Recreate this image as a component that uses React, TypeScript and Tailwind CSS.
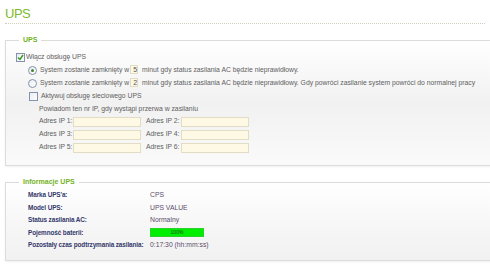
import React from "react"

// small fake checkbox, drawn to match the old firmware UI
const Check = ({ checked }: { checked?: boolean }) => (
  <span className="w-[9px] h-[9px] border border-[#8592ad] bg-gradient-to-br from-[#e9ecf2] to-white flex items-center justify-center shrink-0">
    {checked && (
      <svg width="7" height="7" viewBox="0 0 7 7">
        <path d="M1 3.5 L3 5.5 L6 1" fill="none" stroke="#2f9a1c" strokeWidth="1.4" />
      </svg>
    )}
  </span>
)

const Radio = ({ checked }: { checked?: boolean }) => (
  <span className="w-[9px] h-[9px] rounded-full border border-[#8592ad] bg-gradient-to-br from-[#e9ecf2] to-white flex items-center justify-center shrink-0">
    {checked && <span className="w-[3px] h-[3px] rounded-full bg-[#3d8a2a]" />}
  </span>
)

const Input = ({ value, w }: { value?: string; w: string }) => (
  <span className={`${w} h-[10px] shrink-0 border border-[#e2dcc4] bg-[#fdf9e4] text-[7px] leading-[8px] pl-[2px] text-[#555]`}>
    {value}
  </span>
)

const ipRows = [
  ["Adres IP 1:", "Adres IP 2:"],
  ["Adres IP 3:", "Adres IP 4:"],
  ["Adres IP 5:", "Adres IP 6:"],
]

const info = [
  { label: "Marka UPS'a:", value: "CPS" },
  { label: "Model UPS:", value: "UPS VALUE" },
  { label: "Status zasilania AC:", value: "Normalny" },
  { label: "Pojemność baterii:", value: "bar" },
  { label: "Pozostały czas podtrzymania zasilania:", value: "0:17:30 (hh:mm:ss)" },
]

export default function App() {
  return (
    <div className="w-[490px] h-[270px] overflow-hidden bg-white font-['Liberation_Sans',Arial,sans-serif] whitespace-nowrap">
      {/* Page title */}
      <div className="mx-[5px] pt-[5px] border-b border-dotted border-[#cfcfbf]">
        <h1 className="text-[13px] leading-[18px] tracking-[-0.5px] text-[#7dba2f]">UPS</h1>
      </div>

      {/* UPS settings */}
      <fieldset className="ml-[5px] mt-[11px] w-[500px] border border-[#dcdcdc] bg-gradient-to-b from-white via-[#f1f1f1] to-[#fafafa] pl-[10px] pb-[11px] shadow-[0_1px_2px_rgba(0,0,0,0.06)]">
        <legend className="px-[4px] ml-[3px] text-[7px] leading-[10px] font-bold text-[#74b21e]">UPS</legend>
        <div className="mt-[6px] text-[6.8px] text-[#606060]">
          <div className="h-[13px] flex items-center gap-[1px]">
            <Check checked />
            <span>Włącz obsługę UPS</span>
          </div>
          <div className="h-[13px] flex items-center pl-[12px]">
            <Radio checked />
            <span className="ml-[3px]">System zostanie zamknięty w</span>
            <span className="ml-[1px]"><Input value="5" w="w-[27px]" /></span>
            <span className="ml-[4px]">minut gdy status zasilania AC będzie nieprawidłowy.</span>
          </div>
          <div className="h-[13px] flex items-center pl-[12px]">
            <Radio />
            <span className="ml-[3px]">System zostanie zamknięty w</span>
            <span className="ml-[1px]"><Input value="2" w="w-[27px]" /></span>
            <span className="ml-[4px]">minut gdy status zasilania AC będzie nieprawidłowy. Gdy powróci zasilanie system powróci do normalnej pracy</span>
          </div>
          <div className="h-[13px] flex items-center pl-[13px] gap-[3px]">
            <Check />
            <span>Aktywuj obsługę sieciowego UPS</span>
          </div>
          <div className="h-[12px] flex items-center pl-[23px]">Powiadom ten nr IP, gdy wystąpi przerwa w zasilaniu</div>
          {ipRows.map((row, i) => (
            <div key={i} className="h-[13px] flex items-center pl-[23px]">
              <span className="w-[34px] shrink-0">{row[0]}</span>
              <Input w="w-[68px]" />
              <span className="w-[35px] shrink-0 ml-[5px]">{row[1]}</span>
              <Input w="w-[68px]" />
            </div>
          ))}
        </div>
      </fieldset>

      {/* UPS info */}
      <fieldset className="ml-[5px] mt-[11px] w-[500px] border border-[#dcdcdc] bg-gradient-to-b from-white via-[#f7f7f7] to-[#f1f1f1] pl-[22px] pb-[8px] shadow-[0_1px_2px_rgba(0,0,0,0.06)]">
        <legend className="px-[4px] -ml-[9px] text-[7px] leading-[10px] font-bold text-[#74b21e]">Informacje UPS</legend>
        <div className="mt-[2px] text-[6.8px]">
          {info.map((r) => (
            <div key={r.label} className="h-[12.5px] flex items-center">
              <span className="w-[122px] shrink-0 text-[6.4px] tracking-[-0.1px] font-bold text-[#33386a]">{r.label}</span>
              {r.value === "bar" ? (
                <span className="w-[54px] h-[9px] bg-[#00ee00] border border-[#2ccf2c] flex items-center justify-center text-[5px] text-[#1d4d1d]">100%</span>
              ) : (
                <span className="text-[#5b4d6a]">{r.value}</span>
              )}
            </div>
          ))}
        </div>
      </fieldset>
    </div>
  )
}
